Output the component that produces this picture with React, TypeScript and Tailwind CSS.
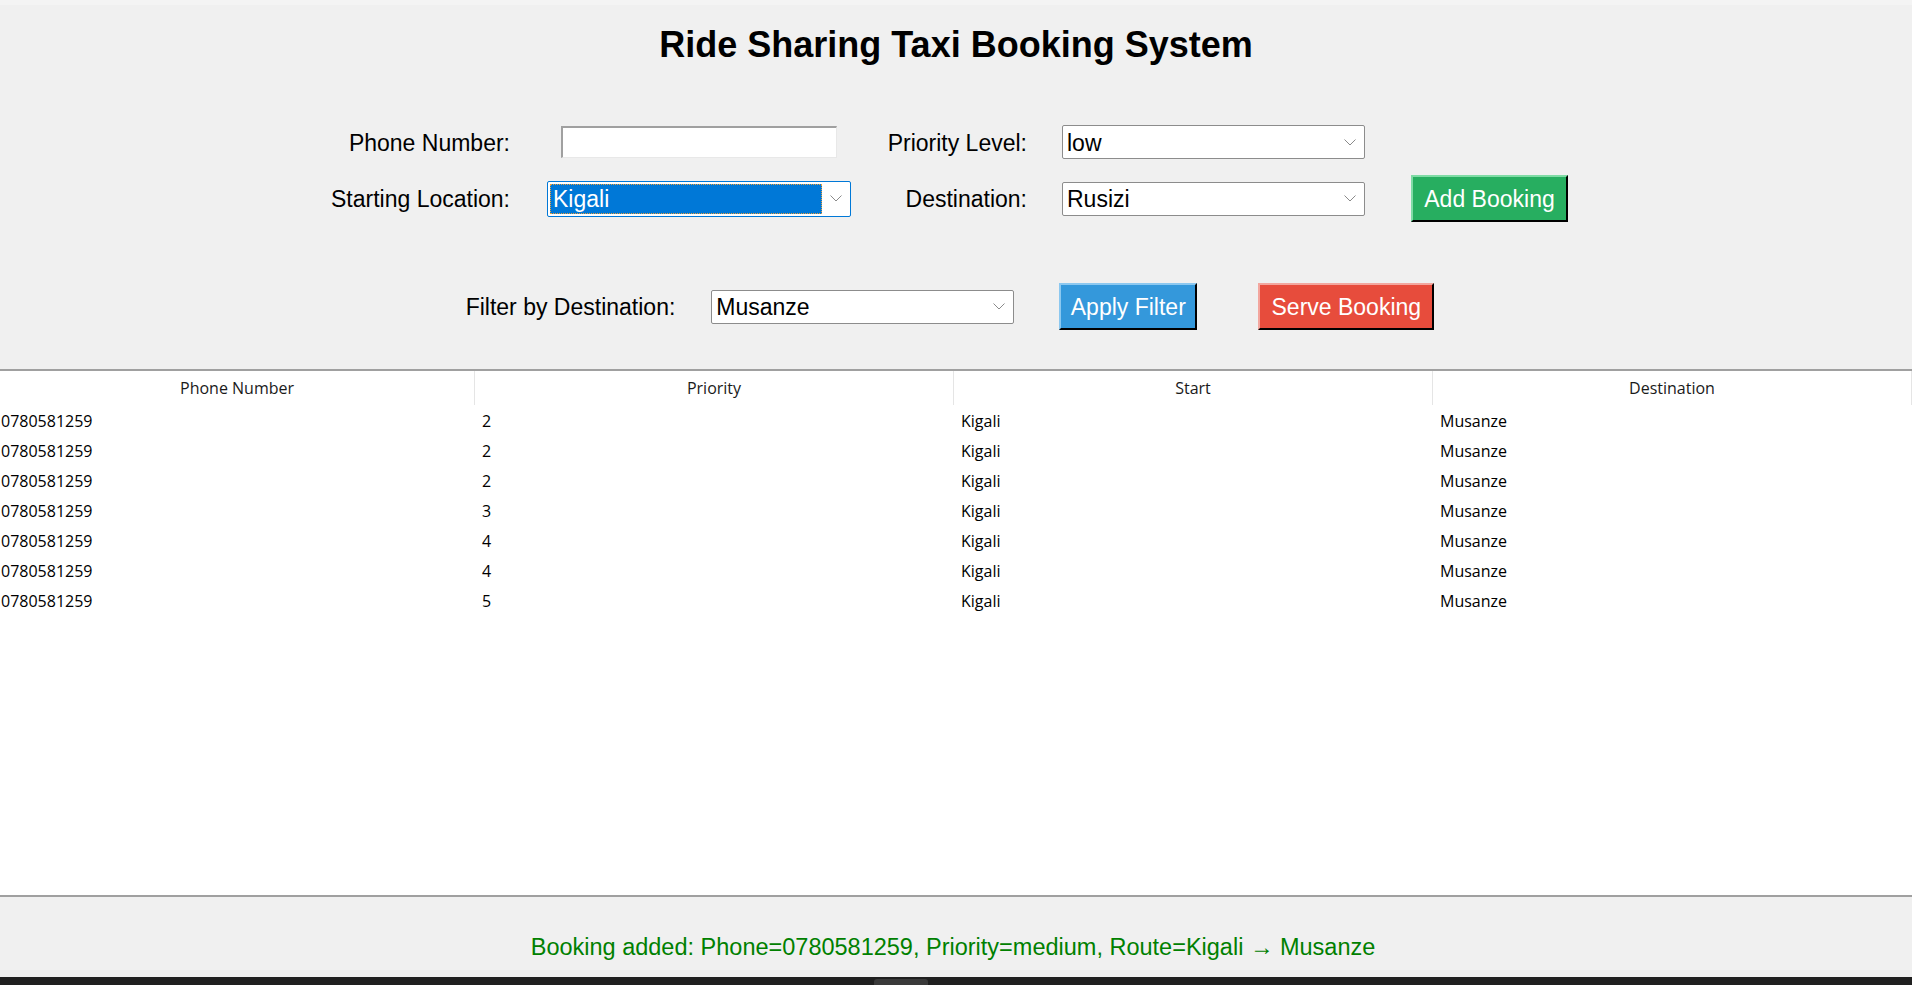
import React from "react";

const ARIAL = { fontFamily: '"Liberation Sans", Arial, sans-serif' };

function Chevron() {
  return (
    <svg width="12" height="7" viewBox="0 0 12 7" className="shrink-0">
      <path d="M0.5 0.5 L6 6 L11.5 0.5" fill="none" stroke="#8a8a8a" strokeWidth="1" />
    </svg>
  );
}

function Combo({ value, focused }: { value: string; focused?: boolean }) {
  if (focused) {
    return (
      <div className="h-[36px] w-full border border-[#0078d7] rounded-[2px] bg-white flex items-stretch">
        <div className="flex-1 m-[2px] bg-[#0078d7] outline-1 outline-dotted outline-[#e8a040] -outline-offset-1 flex items-center pl-[3px] pt-[2px] text-white text-[23px] leading-none">
          {value}
        </div>
        <div className="w-[26px] flex items-center justify-center pr-[2px]">
          <Chevron />
        </div>
      </div>
    );
  }
  return (
    <div className="h-[34px] w-full border border-[#8c8c8c] rounded-[2px] bg-white flex items-center">
      <div className="flex-1 pl-[4px] pt-[2px] text-[23px] leading-none text-black">{value}</div>
      <div className="w-[26px] flex items-center justify-center pr-[2px]">
        <Chevron />
      </div>
    </div>
  );
}

function TkButton({
  label,
  width,
  bg,
  light,
}: {
  label: string;
  width: string;
  bg: string;
  light: string;
}) {
  return (
    <div
      className={`${width} ${bg} ${light} h-[47px] pt-[2px] border-t-2 border-l-2 border-r-2 border-b-2 border-r-black border-b-black flex items-center justify-center text-white text-[23px] leading-none`}
    >
      {label}
    </div>
  );
}

const rows = [
  { phone: "0780581259", priority: "2", start: "Kigali", dest: "Musanze" },
  { phone: "0780581259", priority: "2", start: "Kigali", dest: "Musanze" },
  { phone: "0780581259", priority: "2", start: "Kigali", dest: "Musanze" },
  { phone: "0780581259", priority: "3", start: "Kigali", dest: "Musanze" },
  { phone: "0780581259", priority: "4", start: "Kigali", dest: "Musanze" },
  { phone: "0780581259", priority: "4", start: "Kigali", dest: "Musanze" },
  { phone: "0780581259", priority: "5", start: "Kigali", dest: "Musanze" },
];

export default function App() {
  return (
    <div className="w-[1912px] h-[985px] bg-[#f0f0f0] flex flex-col overflow-hidden text-black" style={ARIAL}>
      <div className="h-[5px] bg-[#f4f4f4] shrink-0" />
      <h1 className="mt-[22px] h-[36px] leading-[36px] text-center font-bold text-[36px] shrink-0">
        Ride Sharing Taxi Booking System
      </h1>

      {/* Form grid */}
      <div className="mt-[62px] grid justify-center grid-cols-[227px_304px_211px_303px_227px] grid-rows-[34px_47px] gap-y-[16px] shrink-0 text-[23px]">
        <div className="flex items-center justify-end pr-[37px] pt-[2px] leading-none">Phone Number:</div>
        <div className="flex items-center justify-center">
          <div className="w-[276px] h-[32px] bg-white border-t-2 border-l-2 border-t-[#a0a0a0] border-l-[#a0a0a0] border-r border-b border-r-[#e8e8e8] border-b-[#e8e8e8]" />
        </div>
        <div className="flex items-center justify-end pr-[35px] pt-[2px] leading-none">Priority Level:</div>
        <div className="flex items-center">
          <Combo value="low" />
        </div>
        <div />

        <div className="flex items-center justify-end pr-[37px] pt-[2px] leading-none">Starting Location:</div>
        <div className="flex items-center">
          <Combo value="Kigali" focused />
        </div>
        <div className="flex items-center justify-end pr-[35px] pt-[2px] leading-none">Destination:</div>
        <div className="flex items-center">
          <Combo value="Rusizi" />
        </div>
        <div className="flex items-center pl-[46px]">
          <TkButton label="Add Booking" width="w-[157px]" bg="bg-[#27ae60]" light="border-t-[#7fdba5] border-l-[#7fdba5]" />
        </div>
      </div>

      {/* Filter row */}
      <div className="mt-[61px] h-[47px] flex items-center justify-center pr-[12px] shrink-0 text-[23px]">
        <div className="leading-none pt-[2px]">Filter by Destination:</div>
        <div className="ml-[36px] w-[303px]">
          <Combo value="Musanze" />
        </div>
        <div className="ml-[45px]">
          <TkButton label="Apply Filter" width="w-[138px]" bg="bg-[#3498db]" light="border-t-[#8cc8f0] border-l-[#8cc8f0]" />
        </div>
        <div className="ml-[61px]">
          <TkButton label="Serve Booking" width="w-[176px]" bg="bg-[#e74c3c]" light="border-t-[#f3a69e] border-l-[#f3a69e]" />
        </div>
      </div>

      {/* Table */}
      <div
        className="mt-[39px] h-[528px] shrink-0 bg-white border-t-2 border-b-2 border-[#a0a0a0] flex flex-col text-[16px]"
        style={{ fontFamily: '"Open Sans", "Noto Sans", sans-serif' }}
      >
        <div className="grid grid-cols-[475px_479px_479px_1fr] h-[34px]">
          {["Phone Number", "Priority", "Start", "Destination"].map((h) => (
            <div key={h} className="flex items-center justify-center border-r border-[#e5e5e5] text-[#1a1a1a] leading-none">
              {h}
            </div>
          ))}
        </div>
        {rows.map((r, i) => (
          <div key={i} className="grid grid-cols-[475px_479px_479px_1fr] h-[30px] pt-[2px] items-center leading-none text-black">
            <div className="pl-[1px]">{r.phone}</div>
            <div className="pl-[7px]">{r.priority}</div>
            <div className="pl-[7px]">{r.start}</div>
            <div className="pl-[7px]">{r.dest}</div>
          </div>
        ))}
      </div>

      {/* Status */}
      <div className="h-[80px] shrink-0 pt-[37px] text-center">
        <div className="leading-[26px] text-[23.5px] text-[#008000] pr-[6px]">
          Booking added: Phone=0780581259, Priority=medium, Route=Kigali → Musanze
        </div>
      </div>

      {/* Taskbar strip */}
      <div className="h-[8px] shrink-0 bg-[#202020] flex">
        <div className="ml-[874px] mt-[2px] w-[54px] h-[6px] rounded-t-[3px] bg-[#3a3a3a]" />
      </div>
    </div>
  );
}
